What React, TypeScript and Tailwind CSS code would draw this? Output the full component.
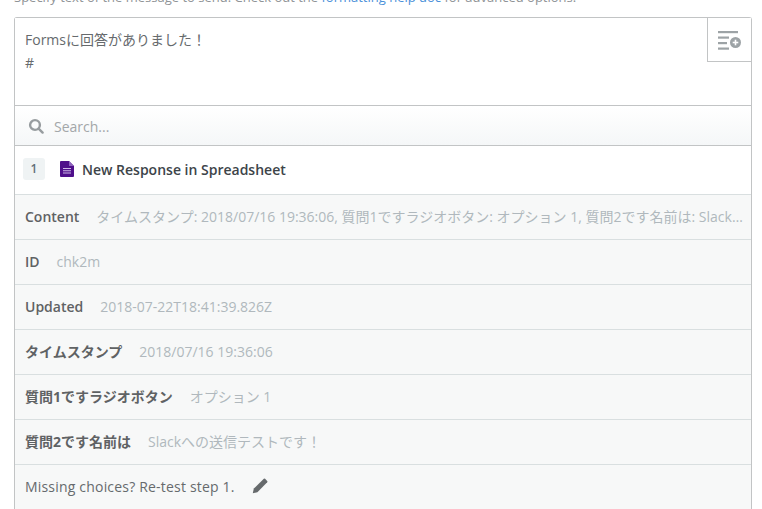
import React from "react";

function Row({ label, value, strong, truncate }: { label: string; value: string; strong?: boolean; truncate?: boolean }) {
  return (
    <div className="flex h-[45px] items-center border-b border-[#d9dfe0] bg-[#f7f8f8] pb-[2px] pl-[10px] pr-[5px] text-[14px] whitespace-nowrap">
      <span className={`${strong ? "font-bold" : "font-semibold"} mr-[17px] shrink-0 text-[#5f6264]`}>{label}</span>
      <span className={`text-[#b0b8bd] ${truncate ? "min-w-0 truncate" : ""}`}>{value}</span>
    </div>
  );
}

export default function App() {
  return (
    <div className="h-[509px] w-[762px] overflow-hidden bg-white font-['Open_Sans','Noto_Sans_CJK_JP',sans-serif] text-[14px]">
      <p className="-mt-[12px] ml-[14px] h-[29px] whitespace-nowrap text-[13px] leading-[18px] text-[#8f9396]">
        Specify text of the message to send. Check out the <span className="text-[#4a90d9]">formatting help doc</span> for advanced options.
      </p>
      <div className="ml-[14px] w-[738px] rounded-t-[3px] border border-b-0 border-[#c2c4c5]">
        <div className="relative h-[88px] border-b border-[#c2c4c5] bg-white pl-[10px] pt-[10px] text-[14px] leading-[23px] text-[#666a6d]">
          <div>Formsに回答がありました！</div>
          <div>#</div>
          <div className="absolute right-0 top-0 flex h-[44px] w-[44px] items-center justify-center border-b border-l border-[#c2c4c5] bg-white">
            <svg width="24" height="22" viewBox="0 0 24 22" fill="#9da3a6">
              <rect x="0" y="2" width="20" height="2.2" />
              <rect x="0" y="7.5" width="11" height="2.2" />
              <rect x="0" y="13" width="9" height="2.2" />
              <rect x="0" y="18.5" width="11" height="2.2" />
              <circle cx="17.5" cy="13.5" r="5.5" />
              <rect x="14.7" y="12.7" width="5.6" height="1.6" fill="#fff" />
              <rect x="16.7" y="10.7" width="1.6" height="5.6" fill="#fff" />
            </svg>
          </div>
        </div>
        <div className="flex h-[40px] items-center border-b border-[#c2c4c5] bg-gradient-to-b from-white to-[#f5f7f8] pl-[13px]">
          <svg width="16" height="16" viewBox="0 0 16 16" fill="none" stroke="#979c9f" strokeWidth="2.4" className="mr-[10px]">
            <circle cx="7" cy="7" r="4.9" />
            <path d="M10.6 10.6 L14.6 14.6" strokeLinecap="round" />
          </svg>
          <span className="pt-[2px] text-[14px] text-[#a3a7a9]">Search...</span>
        </div>
        <div className="flex h-[49px] items-center border-b border-[#d9dfe0] bg-white pl-[8px]">
          <span className="mb-[2px] flex h-[22px] w-[22px] items-center justify-center rounded-[3px] bg-[#eff3f4] text-[12px] font-semibold text-[#5f6e78]">1</span>
          <svg width="14" height="16" viewBox="0 0 14 16" className="mb-[2px] ml-[15px] mr-[8px]">
            <path d="M1 0 H9 L14 5 V15 a1 1 0 0 1 -1 1 H1 a1 1 0 0 1 -1 -1 V1 a1 1 0 0 1 1 -1 Z" fill="#4f0f8b" />
            <path d="M9 0 L14 5 H9 Z" fill="#8d63bd" />
            <path d="M3 7 H11 V8 H3 Z M3 9.3 H11 V10.3 H3 Z M3 11.6 H11 V12.6 H3 Z" fill="#cdb8e6" />
          </svg>
          <span className="pb-[2px] font-semibold text-[#3d4449]">New Response in Spreadsheet</span>
        </div>
        <Row label="Content" value="タイムスタンプ: 2018/07/16 19:36:06, 質問1ですラジオボタン: オプション 1, 質問2です名前は: Slackへの送信テストです！" truncate />
        <Row label="ID" value="chk2m" />
        <Row label="Updated" value="2018-07-22T18:41:39.826Z" />
        <Row label="タイムスタンプ" value="2018/07/16 19:36:06" strong />
        <Row label="質問1ですラジオボタン" value="オプション 1" strong />
        <Row label="質問2です名前は" value="Slackへの送信テストです！" strong />
        <div className="flex h-[45px] items-center bg-[#f7f8f8] pb-[2px] pl-[10px] text-[#666a6d]">
          <span className="tracking-[0.19px]">Missing choices? Re-test step 1.</span>
          <svg width="16" height="16" viewBox="0 0 16 16" fill="#666a6c" className="mb-[2px] ml-[17px]">
            <path d="M0.8 15.2 L1.8 10.6 L11.8 0.8 a1 1 0 0 1 1.3 0 L15.2 2.9 a1 1 0 0 1 0 1.3 L5.4 14.2 Z" />
          </svg>
        </div>
      </div>
    </div>
  );
}
